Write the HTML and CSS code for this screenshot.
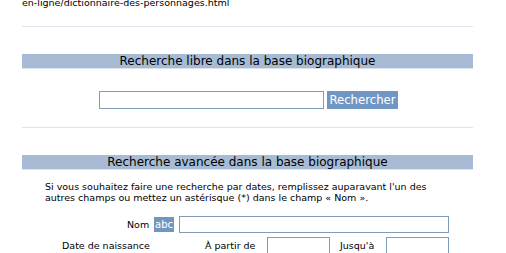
FILE: index.html
```html
<!DOCTYPE html>
<html lang="fr">
<head>
<meta charset="UTF-8" />
<title>Dictionnaire des personnages</title>
<link rel="stylesheet" href="styles.css">
</head>
<body>
<div class="page">
	<div class="url">en-ligne/dictionnaire-des-personnages.html</div>
	<hr class="sep">

	<h2 class="bar">Recherche libre dans la base biographique</h2>
	<form class="free">
		<input type="text" class="free-input">
		<button type="button" class="btn">Rechercher</button>
	</form>
	<hr class="sep">

	<h2 class="bar bar-adv">Recherche avancée dans la base biographique</h2>
	<p class="note">Si vous souhaitez faire une recherche par dates, remplissez auparavant l'un des autres champs ou mettez un astérisque (*) dans le champ « Nom ».</p>

	<div class="row row-nom">
		<span class="lbl">Nom</span>
		<span class="abc">abc</span>
		<input type="text" class="nom-input">
	</div>
	<div class="row row-date">
		<span class="lbl-date">Date de naissance</span>
		<span class="lbl-from">À partir de</span>
		<input type="text" class="date-input">
		<span class="lbl-to">Jusqu'à</span>
		<input type="text" class="date-input">
	</div>
</div>
</body>
</html>
```

FILE: styles.css
```css
body {
	margin: 0;
	font-family: "DejaVu Sans", Verdana, sans-serif;
	color: #000;
	background: #fff;
}
.page {
	width: 451px;
	margin: -3px 0 0 22px;
}
.url {
	font-size: 9.5px;
	line-height: 12px;
}
.sep {
	border: 0;
	border-top: 1px solid #dce5f0;
	margin: 17px 0 0;
	height: 0;
}
.bar {
	margin: 27px 0 0;
	background: #a7bcd4;
	font-size: 12px;
	font-weight: normal;
	line-height: 14px;
	text-align: center;
	border-bottom: 1px solid #dbe4ee;
	padding: 0;
}
.free {
	display: flex;
	justify-content: center;
	gap: 3px;
	margin: 22px 0 18px;
	padding-left: 2px;
}
.free-input {
	width: 221px;
	height: 14px;
	border: 1px solid #7f9db9;
	padding: 1px;
	margin: 0;
}
.btn {
	width: 71px;
	height: 18px;
	border: 0;
	margin: 0;
	padding: 0;
	background: #7097c4;
	color: #fff;
	font-family: "DejaVu Sans", Verdana, sans-serif;
	font-size: 11.7px;
}
.bar-adv {
	margin-top: 27px;
}
.note {
	font-size: 9.5px;
	line-height: 11px;
	margin: 11px 0 0 23px;
	width: 400px;
}
.row {
	display: flex;
	align-items: center;
	font-size: 9.5px;
}
.row-nom {
	margin-top: 13px;
}
.lbl {
	margin-left: 105px;
	width: 27px;
}
.abc {
	background: #7097c4;
	color: #fff;
	font-size: 10px;
	line-height: 15px;
	padding: 0 1px;
	width: 18px;
	margin-right: 5px;
}
.nom-input {
	width: 266px;
	height: 13px;
	border: 1px solid #7f9db9;
	padding: 1px;
	margin: 0;
}
.row-date {
	margin-top: 4px;
}
.lbl-date {
	margin-left: 40px;
	width: 143px;
}
.lbl-from {
	width: 62px;
}
.lbl-to {
	margin-left: 10px;
	width: 46px;
}
.date-input {
	width: 59px;
	height: 13px;
	border: 1px solid #7f9db9;
	padding: 1px;
	margin: 0;
}
```
